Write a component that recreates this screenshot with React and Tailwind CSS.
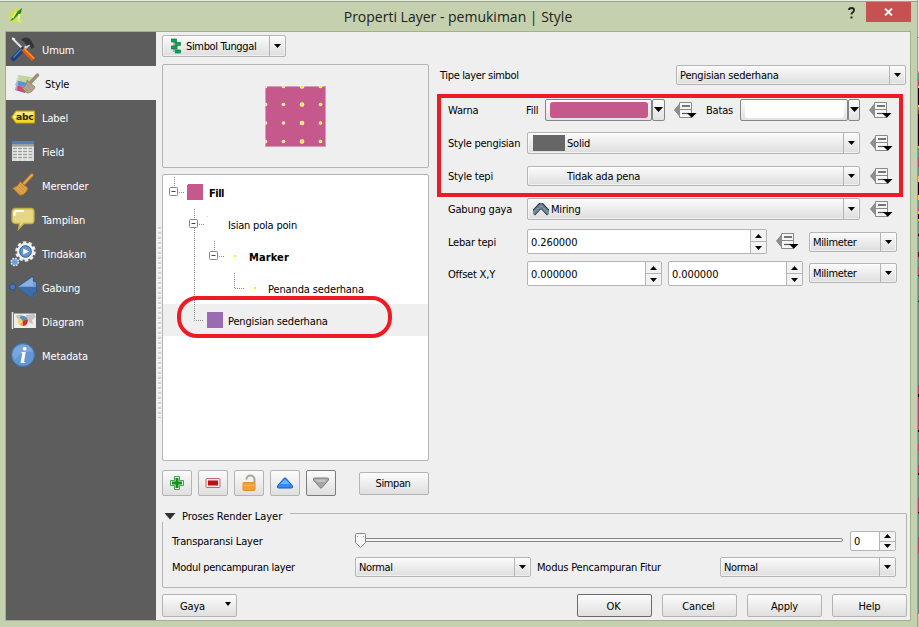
import React from 'react';

const BOX = 'border border-[#b4b4b4] rounded-[2px]';
const FACE = 'border border-[#b4b4b4] rounded-[2px] bg-gradient-to-b from-[#fbfbfb] to-[#dedede] shadow-[inset_0_0_0_1px_rgba(255,255,255,0.5)]';

function Arrow({ up = false, w = 7, h = 4 }) {
  return (
    <svg width={w} height={h} viewBox="0 0 8 4" preserveAspectRatio="none" className="block">
      <path d={up ? 'M0 4L4 0L8 4Z' : 'M0 0H8L4 4Z'} fill="#000" />
    </svg>
  );
}

function Combo({ className = '', pad = 'pl-[3px]', icon = null, children }) {
  return (
    <div className={`flex shrink-0 ${FACE} ${className}`}>
      <div className={`flex min-w-0 flex-1 items-center whitespace-nowrap ${pad}`}>
        {icon}
        <span className="pt-[2px]">{children}</span>
      </div>
      <div className="flex w-[16px] items-center justify-center border-l border-[#b4b4b4]">
        <Arrow />
      </div>
    </div>
  );
}

function Spin({ className = '', value }) {
  return (
    <div className={`flex shrink-0 overflow-hidden bg-white ${BOX} ${className}`}>
      <div className="flex flex-1 items-center pl-[3px] pt-[2px] tracking-[-0.1px]">{value}</div>
      <div className="flex w-[16px] flex-col border-l border-[#b4b4b4] bg-[#f3f3f3]">
        <div className="flex flex-1 items-center justify-center border-b border-[#b4b4b4]"><Arrow up /></div>
        <div className="flex flex-1 items-center justify-center"><Arrow /></div>
      </div>
    </div>
  );
}

function ColorButton({ color, className, dropClass }) {
  return (
    <>
      <div className={`flex h-[22px] shrink-0 rounded-[2px] border border-[#858585] bg-gradient-to-b from-[#fbfbfb] to-[#e2e2e2] py-[2px] pl-[4px] pr-[3px] ${className}`}>
        <div className={`flex-1 rounded-[3px] ${color}`} />
      </div>
      <div className={`flex h-[22px] shrink-0 items-center justify-center rounded-[2px] border border-[#858585] bg-gradient-to-b from-[#fbfbfb] to-[#e2e2e2] pb-[2px] ${dropClass}`}>
        <Arrow w={9} h={5} />
      </div>
    </>
  );
}

function Override({ className = '' }) {
  return (
    <svg width="23" height="17" viewBox="0 0 23 17" className={`block shrink-0 ${className}`}>
      <path d="M5.500 2V14L0.500 8Z" fill="#8f8f8f" stroke="#777" strokeWidth="0.8" />
      <path d="M5.500 0.500H17.500V15.500H5.500Z" fill="#f6f6f6" stroke="#8a8a8a" />
      <path d="M6 2.500V13.500L1 8Z" fill="#8f8f8f" />
      <path d="M8 4H16" stroke="#555" strokeWidth="1.600" />
      <path d="M6 7.500H17.500" stroke="#8a8a8a" />
      <path d="M8 11.500H15" stroke="#555" strokeWidth="1.200" />
      <path d="M13 11H22.500L17.800 15.800Z" fill="#000" />
    </svg>
  );
}

function PushButton({ className = '', border = 'border-[#b4b4b4]', children }) {
  return (
    <div className={`flex shrink-0 items-center justify-center rounded-[2px] border bg-gradient-to-b from-[#fcfcfc] to-[#dfdfdf] ${border} ${className}`}>
      {children}
    </div>
  );
}

const ICONS = {
  Umum: (
    <>
      <path d="M1.500 1.500L13 13" stroke="#e4e4e4" strokeWidth="2" />
      <path d="M1 1l3 1.500" stroke="#fff" strokeWidth="1.500" />
      <path d="M19.500 6L12 13" stroke="#c9d2da" strokeWidth="3" />
      <path d="M10 3C12-.5 18-.5 20.500 4l3 6-3 2-2-4.500-3 1.500-2-4z" fill="#303638" />
      <path d="M11.500 12.500L2.500 21.500" stroke="#1e3f78" strokeWidth="5" strokeLinecap="round" />
      <path d="M10.500 12L2.500 20.500" stroke="#4b7dbd" strokeWidth="1.500" />
      <path d="M12 12L22.500 22.500" stroke="#e25d05" strokeWidth="4.500" />
      <path d="M13 11.500L23 21.500" stroke="#ff9a3c" strokeWidth="1.300" />
    </>
  ),
  Style: (
    <>
      <path d="M4 4l14 2-2 7L2 10z" fill="#c4d49b" />
      <path d="M3 9.500l13 3-2 4L1 14z" fill="#5b93d6" />
      <path d="M2 14l12 3-3 5L1 19z" fill="#c74b77" />
      <path d="M1 6l4-1-2 14-3-1z" fill="#efefef" opacity=".45" />
      <path d="M23.500 4L17 11" stroke="#9a9078" strokeWidth="3.400" strokeLinecap="round" />
      <path d="M13 9l8 7c-1 3-4 6-8 6L8 17c3-1 5-4 5-8z" fill="#b0a58b" stroke="#8d8368" strokeWidth=".8" />
      <path d="M11 17l3 3M13 14l4 5M14 11l5 5" stroke="#9b9177" strokeWidth=".7" />
    </>
  ),
  Label: (
    <>
      <path d="M5 6H23.500V18H5L.7 12z" fill="#f3d934" stroke="#c7a908" />
      <path d="M5.500 7H22.500V10H3.500z" fill="#fae978" />
      <circle cx="3.600" cy="12" r="1" fill="#fff" />
      <text x="5" y="15" fontSize="9.500" fontWeight="bold" fontFamily="DejaVu Sans" textLength="17.500" lengthAdjust="spacingAndGlyphs" fill="#2b2810">abc</text>
    </>
  ),
  Field: (
    <>
      <path d="M1 3H23V22H1z" fill="#d9dcd9" />
      <path d="M1 2H23V5H1z" fill="#4a7fc2" />
      <path d="M1 5H23V7.500H1z" fill="#9b9e9b" />
      <path d="M2 9.500H22M2 12.500H22M2 15.500H22M2 18.500H22" stroke="#9a9f9a" strokeDasharray="4 1" />
      <path d="M6.500 8V22M11.500 8V22M17 8V22" stroke="#eef0ee" />
    </>
  ),
  Merender: (
    <>
      <path d="M21 2L12.500 11" stroke="#b57324" strokeWidth="3.600" strokeLinecap="round" />
      <path d="M21 2L12.500 11" stroke="#e6a856" strokeWidth="2" strokeLinecap="round" />
      <path d="M9 8.500L17 15c-1 4-4 7-8 7.500L1.500 15C5 14 8 12 9 8.500z" fill="#dfa04a" stroke="#a5661b" strokeWidth=".8" />
      <path d="M4 15l6 6M7 13l6 6M9 11l6 6" stroke="#c78a3c" strokeWidth=".8" />
    </>
  ),
  Tampilan: (
    <>
      <path d="M5 1.500H20Q23 1.500 23 5V13Q23 16.500 20 16.500H13L7.500 22L8.500 16.500H5Q1 16.500 1 13V5Q1 1.500 5 1.500z" fill="#e5d783" stroke="#c4ae42" strokeWidth="1.300" />
      <path d="M3.500 8V6Q3.500 4 6 4H12" fill="none" stroke="#fff" strokeWidth="2.200" strokeLinecap="round" />
    </>
  ),
  Tindakan: (
    <>
      <circle cx="14.500" cy="10.500" r="9" fill="none" stroke="#e9e9e9" strokeWidth="2.600" strokeDasharray="3.500 2.150" />
      <circle cx="14.500" cy="10.500" r="7.300" fill="#5f91ca" stroke="#f2f2f2" strokeWidth="2.400" />
      <circle cx="14.500" cy="10.500" r="5.800" fill="#6395ce" stroke="#335f9a" strokeWidth=".9" />
      <path d="M12.200 7.500V13.500L18 10.500z" fill="#fff" />
      <circle cx="3.800" cy="21" r="3.600" fill="#6f9fd4" stroke="#d9e4ee" strokeWidth="1.500" strokeDasharray="1.800 1" />
    </>
  ),
  Gabung: (
    <>
      <circle cx="1.500" cy="12" r="3" fill="#4779b7" stroke="#24497d" strokeWidth=".8" />
      <path d="M6 12L22 1V6L25.500 7V17L22 18V23.500z" fill="#6f9ed5" stroke="#2c538a" strokeWidth=".9" />
      <path d="M6 12H25V17L22 18V23z" fill="#3d6cab" />
      <path d="M9 11L22 2.500V11z" fill="#9fc0e6" opacity=".6" />
    </>
  ),
  Diagram: (
    <>
      <path d="M1.500 3V20" stroke="#e4e4e4" strokeWidth="1.600" />
      <path d="M3 4.500H25V19H3z" fill="#eeeeec" />
      <path d="M5 6.500l5-1 3 2-3 4-4-2zM15 6l8-1 2 3-4 3 1 4-3-1-4-5z" fill="#c2c4bf" />
      <circle cx="11.800" cy="12" r="5" fill="#ecd56f" />
      <path d="M11.800 12L8.500 8.200A5 5 0 0 1 16.500 10z" fill="#5b8dc5" />
      <path d="M11.800 12L16.500 10A5 5 0 0 1 11.800 17z" fill="#d02d2d" />
      <path d="M11.800 12V17A5 5 0 0 1 9 16z" fill="#f0a552" />
    </>
  ),
  Metadata: (
    <>
      <circle cx="12" cy="12" r="11.500" fill="#6297d3" stroke="#3f73b3" />
      <path d="M1.500 12A10.500 10.500 0 0 1 22 9C16 8 8 10 4 17z" fill="#8db5e3" opacity=".55" />
      <text x="12" y="20" fontSize="23" fontStyle="italic" fontWeight="bold" fontFamily="Liberation Serif" textAnchor="middle" fill="#fff">i</text>
    </>
  ),
};

const NAV = ['Umum', 'Style', 'Label', 'Field', 'Merender', 'Tampilan', 'Tindakan', 'Gabung', 'Diagram', 'Metadata'];

function Sidebar() {
  return (
    <div className="w-[150px] shrink-0 bg-[#5d5d5d]">
      {NAV.map((n) => {
        const active = n === 'Style';
        return (
          <div
            key={n}
            className={`flex h-[34px] items-center ${active ? 'bg-[#efefef] pl-[8px] text-black' : 'pl-[5px] text-white'}`}
          >
            <svg width="25" height="25" viewBox="0 0 25 25" overflow="visible" className="block shrink-0">{ICONS[n]}</svg>
            <span className="pl-[6px] pt-[4px] tracking-[-0.1px]">{n}</span>
          </div>
        );
      })}
    </div>
  );
}

const DOT = { stroke: '#8a8a8a', strokeDasharray: '1 1', fill: 'none' };

function Toggle({ x }) {
  return (
    <g>
      <rect x={x - 4.5} y="11.500" width="8" height="8" rx="1" fill="#fff" stroke="#858585" />
      <path d={`M${x - 2.5} 15.500h4`} stroke="#444" />
    </g>
  );
}

function TreeRow({ gutter, label, bold = '', selected = false, children }) {
  return (
    <div className={`flex h-[32px] items-center ${selected ? 'bg-[#efefef]' : ''}`}>
      <svg width={gutter} height="32" className="block shrink-0">{children}</svg>
      <span className={`whitespace-nowrap pt-[4px] ${bold}`}>{label}</span>
    </div>
  );
}

function Tree() {
  return (
    <div className={`mt-[6px] h-[287px] bg-white pt-px ${BOX}`}>
      <TreeRow gutter={46} label="Fill" bold="font-bold tracking-[-0.5px]">
        <path d="M11.500 1V11M16 16.500H22" {...DOT} />
        <Toggle x={11} />
        <rect x="24" y="8" width="16" height="16" fill="#c6598c" />
        <rect x="24" y="8" width="1" height="1" fill="#ffff00" />
      </TreeRow>
      <TreeRow gutter={65} label="Isian pola poin">
        <path d="M31.500 1V11M31.500 20V32M36 16.500H41" {...DOT} />
        <Toggle x={31} />
        <rect x="44" y="8" width="1" height="1" fill="#e8e800" />
      </TreeRow>
      <TreeRow gutter={86} label="Marker" bold="font-bold tracking-[0.1px]">
        <path d="M31.500 0V32M51.500 1V11M56 16.500H61" {...DOT} />
        <Toggle x={51} />
        <rect x="71" y="15" width="2" height="2" fill="#f4f400" />
      </TreeRow>
      <TreeRow gutter={105} label="Penanda sederhana" bold="tracking-[-0.12px]">
        <path d="M31.500 0V32M71.500 1V16.500H82" {...DOT} />
        <rect x="91" y="15" width="2" height="2" fill="#f4f400" />
      </TreeRow>
      <TreeRow gutter={65} label="Pengisian sederhana" bold="tracking-[-0.15px]" selected>
        <path d="M31.500 0V16.500H41" {...DOT} />
        <rect x="44" y="8" width="16" height="16" fill="#9a6bb0" />
      </TreeRow>
    </div>
  );
}

function Preview() {
  const steps = [0.5, 18.5, 37, 55.5];
  return (
    <div className={`mt-[7px] flex h-[104px] items-center justify-center ${BOX}`}>
      <svg width="61" height="61" className="mr-px mt-px block">
        <rect x=".5" y=".5" width="60" height="60" fill="#c6598c" stroke="#d79abb" />
        {steps.map((y) =>
          steps.map((x) => (
            <g key={`${x}-${y}`}>
              <circle cx={x} cy={y} r={x === 37 ? 2.3 : 1.8} fill="#fff3e4" />
              <circle cx={x} cy={y} r={x === 37 ? 1.4 : 1} fill="#eeee10" />
            </g>
          ))
        )}
      </svg>
    </div>
  );
}

function LeftPane() {
  const mark = (
    <svg width="13" height="16" className="mr-[3px] block shrink-0" fill="#06a94f" stroke="#0b7a3d" strokeWidth=".7">
      <path d="M4 2V14M7 4V13" stroke="#777" strokeWidth="1" />
      <rect x="1.500" y="1" width="5" height="3" />
      <rect x="5.500" y="4.500" width="5" height="3" />
      <rect x="1.500" y="8" width="5" height="3" />
      <rect x="5.500" y="12" width="5" height="3" />
    </svg>
  );
  return (
    <div className="w-[267px] shrink-0">
      <Combo className="mt-[3px] h-[22px] w-[124px] tracking-[-0.35px]" pad="pl-[7px]" icon={mark}>
        Simbol Tunggal
      </Combo>
      <Preview />
      <Tree />
      <div className="mt-[9px] flex items-center gap-[6px]">
        <PushButton className="h-[26px] w-[30px]">
          <svg width="16" height="16">
            <path d="M5.500 1.500h5v4h4v5h-4v4h-5v-4h-4v-5h4z" fill="#eaf6ea" stroke="#4d9a51" strokeLinejoin="round" />
            <path d="M6.500 3h3v3.500H13v3H9.500V13h-3V9.500H3v-3h3.500z" fill="#10941b" />
          </svg>
        </PushButton>
        <PushButton className="h-[26px] w-[30px]">
          <svg width="16" height="16">
            <rect x="1" y="3.500" width="14" height="9" rx="1" fill="#fbe9e9" stroke="#c36a6a" />
            <rect x="3" y="5.500" width="10" height="5" fill="#bd0f14" />
          </svg>
        </PushButton>
        <PushButton className="h-[26px] w-[30px]">
          <svg width="16" height="18">
            <path d="M5.500 5.500C5 .5 13.500 0 13.500 5.500V9" fill="none" stroke="#aaa69a" strokeWidth="2" />
            <rect x="2" y="8.500" width="12" height="8" rx="1" fill="#eda136" stroke="#d9932f" />
            <path d="M2.500 11.500H13.500" stroke="#f3b660" />
          </svg>
        </PushButton>
        <PushButton className="h-[26px] w-[30px]">
          <svg width="18" height="12">
            <path d="M8 1.300Q9 .5 10 1.300L16.500 9Q17 11 15.500 11H2.500Q1 11 1.500 9z" fill="#2f8cff" stroke="#1359bd" />
            <path d="M9 2.500L14 7H4z" fill="#8cc4ff" opacity=".7" />
          </svg>
        </PushButton>
        <PushButton className="h-[26px] w-[30px]" border="border-[#7c7c7c]">
          <svg width="18" height="12">
            <path d="M8 10.700Q9 11.500 10 10.700L16.500 3Q17 1 15.500 1H2.500Q1 1 1.500 3z" fill="#a6a6a6" stroke="#808080" />
            <path d="M3 2.500H15L13 5H5z" fill="#cfcfcf" opacity=".7" />
          </svg>
        </PushButton>
        <PushButton className="ml-auto h-[23px] w-[70px] pr-[2px] pt-[2px] tracking-[-0.4px]">Simpan</PushButton>
      </div>
    </div>
  );
}

function Label({ children, className = 'w-[79px]' }) {
  return <span className={`shrink-0 whitespace-nowrap pt-[2px] ${className}`}>{children}</span>;
}

function RightPane() {
  const joinIcon = (
    <svg width="16" height="14" className="mr-[2px] mt-[2px] block">
      <path d="M0 10.500L8 2L16 10.500" fill="none" stroke="#26303a" strokeWidth="5.500" />
      <path d="M0 10.500L8 2.500L16 10.500" fill="none" stroke="#5d7f9d" strokeWidth="4" />
      <path d="M0 10.500L8 2.500L16 10.500" fill="none" stroke="#c9be5a" strokeDasharray="2 1" />
    </svg>
  );
  return (
    <div className="flex-1 pt-[33px]">
      <div className="flex h-[20px] items-center pl-[11px]">
        <Label className="w-[236px] tracking-[-0.35px]">Tipe layer simbol</Label>
        <Combo className="h-[20px] w-[230px]">Pengisian sederhana</Combo>
      </div>
      <div className="ml-[8px] mt-[9px] h-[103px] w-[466px] border-4 border-[#ed1c24] pl-[7px]">
        <div className="mt-px flex h-[22px] items-center">
          <Label className="w-[78px]">Warna</Label>
          <Label className="w-[19px]">Fill</Label>
          <ColorButton color="bg-[#c6598c]" className="w-[107px]" dropClass="w-[13px]" />
          <Override className="ml-[9px]" />
          <Label className="ml-[9px] w-[34px]">Batas</Label>
          <ColorButton color="bg-white" className="w-[108px]" dropClass="w-[12px]" />
          <Override className="ml-[9px]" />
        </div>
        <div className="mt-[11px] flex h-[22px] items-center">
          <Label className="w-[79px] tracking-[-0.25px]">Style pengisian</Label>
          <Combo className="h-[22px] w-[333px]" pad="pl-[5px]" icon={<div className="mr-[2px] h-[16px] w-[32px] bg-[#666]" />}>
            Solid
          </Combo>
          <Override className="ml-[10px]" />
        </div>
        <div className="mt-[12px] flex h-[20px] items-center">
          <Label>Style tepi</Label>
          <Combo className="h-[20px] w-[333px]" pad="pl-[39px]">Tidak ada pena</Combo>
          <Override className="ml-[10px]" />
        </div>
      </div>
      <div className="mt-px flex h-[22px] items-center pl-[19px]">
        <Label>Gabung gaya</Label>
        <Combo className="h-[22px] w-[333px]" pad="pl-[5px]" icon={joinIcon}>
          Miring
        </Combo>
        <Override className="ml-[10px]" />
      </div>
      <div className="mt-[9px] flex h-[25px] items-center pl-[19px]">
        <Label>Lebar tepi</Label>
        <Spin className="h-[25px] w-[240px]" value="0.260000" />
        <Override className="ml-[9px]" />
        <Combo className="ml-[10px] h-[20px] w-[88px] tracking-[-0.35px]">Milimeter</Combo>
      </div>
      <div className="mt-[7px] flex h-[25px] items-center pl-[19px]">
        <Label>Offset X,Y</Label>
        <Spin className="h-[25px] w-[135px]" value="0.000000" />
        <Spin className="ml-[6px] h-[25px] w-[135px]" value="0.000000" />
        <Combo className="mb-[2px] ml-[6px] h-[20px] w-[88px] tracking-[-0.35px]">Milimeter</Combo>
      </div>
    </div>
  );
}

function RenderGroup() {
  return (
    <div className="mt-[14px] h-[78px] w-[745px]">
      <div className="flex h-[12px]">
        <svg width="12" height="8" className="ml-[2px] mt-[2px] block shrink-0"><path d="M.5 1H11.500L6 7.500z" fill="#303030" /></svg>
        <span className="whitespace-nowrap pl-[6px] leading-[14px] tracking-[-0.05px]">Proses Render Layer</span>
        <div className="ml-[8px] mt-[3px] h-[9px] flex-1 rounded-tr-[2px] border-r border-t border-[#b4b4b4]" />
      </div>
      <div className="h-[66px] rounded-b-[2px] border-x border-b border-[#b4b4b4] pl-[9px] pt-[9px]">
        <div className="flex h-[20px] items-center">
          <Label className="w-[183px] tracking-[-0.15px]">Transparansi Layer</Label>
          <div className="flex w-[488px] items-center">
            <svg width="11" height="15" className="-mr-px mb-[2px] block shrink-0">
              <path d="M.5 1.500Q.5.500 1.500.500H9.500Q10.500.500 10.500 1.500V9.500L5.500 14.500L.5 9.500z" fill="#f7f7f7" stroke="#858585" />
              <path d="M2.500 3v1M8.500 3v1" stroke="#999" />
            </svg>
            <div className="mb-[2px] h-[4px] flex-1 rounded-r-[2px] border border-[#858585] bg-[#f4f4f4]" />
          </div>
          <Spin className="ml-[7px] h-[20px] w-[46px]" value="0" />
        </div>
        <div className="mt-[6px] flex h-[20px] items-center">
          <Label className="w-[183px] tracking-[-0.3px]">Modul pencampuran layer</Label>
          <Combo className="h-[20px] w-[176px] tracking-[-0.35px]">Normal</Combo>
          <Label className="ml-[6px] w-[183px]">Modus Pencampuran Fitur</Label>
          <Combo className="h-[20px] w-[176px] tracking-[-0.35px]">Normal</Combo>
        </div>
      </div>
    </div>
  );
}

const GREEN = '#17b583';
const PINK = '#b1497c';
const YELLOW = '#e0de1c';
// Each band of the map visible beside the dialog: colour and height in pixels.
const BANDS = [
  ['#ececec', 37], ['#9a9a9a', 1], ['#e2e2e0', 33], ['#a8a8a0', 2],
  [GREEN, 6], [PINK, 7], [YELLOW, 2], ['#000', 17], [YELLOW, 2], ['#888', 3], ['#4a4a10', 4],
  ['#000', 32], [YELLOW, 2], [GREEN, 9], [PINK, 10], [GREEN, 9], [YELLOW, 6], ['#000', 13],
  [YELLOW, 5], [GREEN, 8], [PINK, 3], [YELLOW, 3], ['#000', 5], [YELLOW, 2], [GREEN, 13],
  ['#000', 2], [GREEN, 16], ['#222', 5], [GREEN, 10], [PINK, 8], ['#000', 1], [GREEN, 25],
  ['#000', 1], [GREEN, 83], [PINK, 9], ['#000', 3], [PINK, 33], ['#000', 2], [GREEN, 12],
  [PINK, 7], [GREEN, 14], [PINK, 8], ['#000', 2], [GREEN, 23], [PINK, 14], ['#000', 1],
  [GREEN, 24], [PINK, 17], [GREEN, 60],
];

function MapStrip() {
  return (
    <div className="flex w-px shrink-0 flex-col overflow-hidden">
      {BANDS.map(([background, height], i) => (
        <div key={i} className="shrink-0" style={{ background, height }} />
      ))}
    </div>
  );
}

export default function App() {
  return (
    <div className="relative flex h-[627px] w-[919px] overflow-hidden bg-[#c5d1ae] font-['DejaVu_Sans_Condensed','DejaVu_Sans',sans-serif] text-[11px] leading-[14px] tracking-[-0.2px] text-black [font-stretch:condensed]">
      <div className="flex w-[918px] shrink-0 flex-col border-r border-[#96a582]">
        <div className="h-px shrink-0 bg-[#e9e9e9]" />
        <div className="flex h-[30px] shrink-0 border-t border-[#96a582]">
          <svg width="14" height="18" className="ml-[9px] mt-[5px] block shrink-0">
            <path d="M7 3Q1 6 2 12Q3 16 8 13Q12 10 11 5Q10 2 7 3z" fill="none" stroke="#d5e23c" strokeWidth="2.500" />
            <path d="M1 14L5 9L9 4L13 1L12 6L9 8L4 13z" fill="#258b2c" />
            <path d="M3.500 11L7 5" stroke="#e7ee60" strokeWidth="1.800" />
            <path d="M8 12L12 15.500" stroke="#e7ee60" strokeWidth="2" />
            <path d="M10 7v5" stroke="#f7ffb0" strokeWidth="1.500" />
          </svg>
          <div className="flex-1 pl-[45px] pt-[5px] text-center font-['Open_Sans','Noto_Sans',sans-serif] text-[14px] leading-[20px] tracking-normal text-[#222] [font-stretch:normal]">Properti Layer - pemukiman | Style</div>
          <div className="flex shrink-0">
            <svg width="8" height="12" className="mr-[10px] mt-[5px] block"><path d="M1 3Q1 1 3.500 1Q6 1 6 3Q6 4.500 4.500 5.500Q3.500 6 3.500 7.500M3.500 9.500V11.500" fill="none" stroke="#1f1f1f" strokeWidth="1.900" /></svg>
            <div className="mr-[6px] flex h-[20px] w-[45px] items-center justify-center bg-[#c75050]">
              <svg width="9" height="8"><path d="M1 .500L8 7.500M8 .500L1 7.500" stroke="#fff" strokeWidth="1.800" /></svg>
            </div>
          </div>
        </div>
        <div className="ml-[5px] flex h-[590px] w-[906px] shrink-0 border border-[#a3b08b] bg-[#efefef]">
          <Sidebar />
          <div className="flex w-[6px] shrink-0 flex-col pl-[2px] pt-[195px]">
            <div className="h-[191px] w-[3px] bg-[repeating-linear-gradient(to_bottom,#d0d0d0_0px,#d0d0d0_2px,#ffffff_2px,#ffffff_3px,#efefef_3px,#efefef_5px)]" />
          </div>
          <div className="flex-1">
            <div className="flex h-[464px]">
              <LeftPane />
              <RightPane />
            </div>
            <RenderGroup />
            <div className="mt-[6px] flex w-[745px] gap-[10px]">
              <PushButton className="mr-auto h-[23px] w-[75px]">
                <span className="mr-[20px] pl-[12px] pt-[2px]">Gaya</span>
                <div className="pb-[3px]"><Arrow w={6} h={4} /></div>
              </PushButton>
              <PushButton className="h-[23px] w-[75px] pr-[2px] pt-[2px]" border="border-[#6a6a6a]">OK</PushButton>
              <PushButton className="h-[23px] w-[75px] pr-[2px] pt-[2px]">Cancel</PushButton>
              <PushButton className="h-[23px] w-[75px] pt-[2px]">Apply</PushButton>
              <PushButton className="h-[23px] w-[75px] pt-[2px]">Help</PushButton>
            </div>
          </div>
        </div>
      </div>
      <MapStrip />
      <div className="pointer-events-none absolute left-[177px] top-[296px] h-[42px] w-[215px] rounded-[20px] border-4 border-[#ed1c24]" />
    </div>
  );
}
